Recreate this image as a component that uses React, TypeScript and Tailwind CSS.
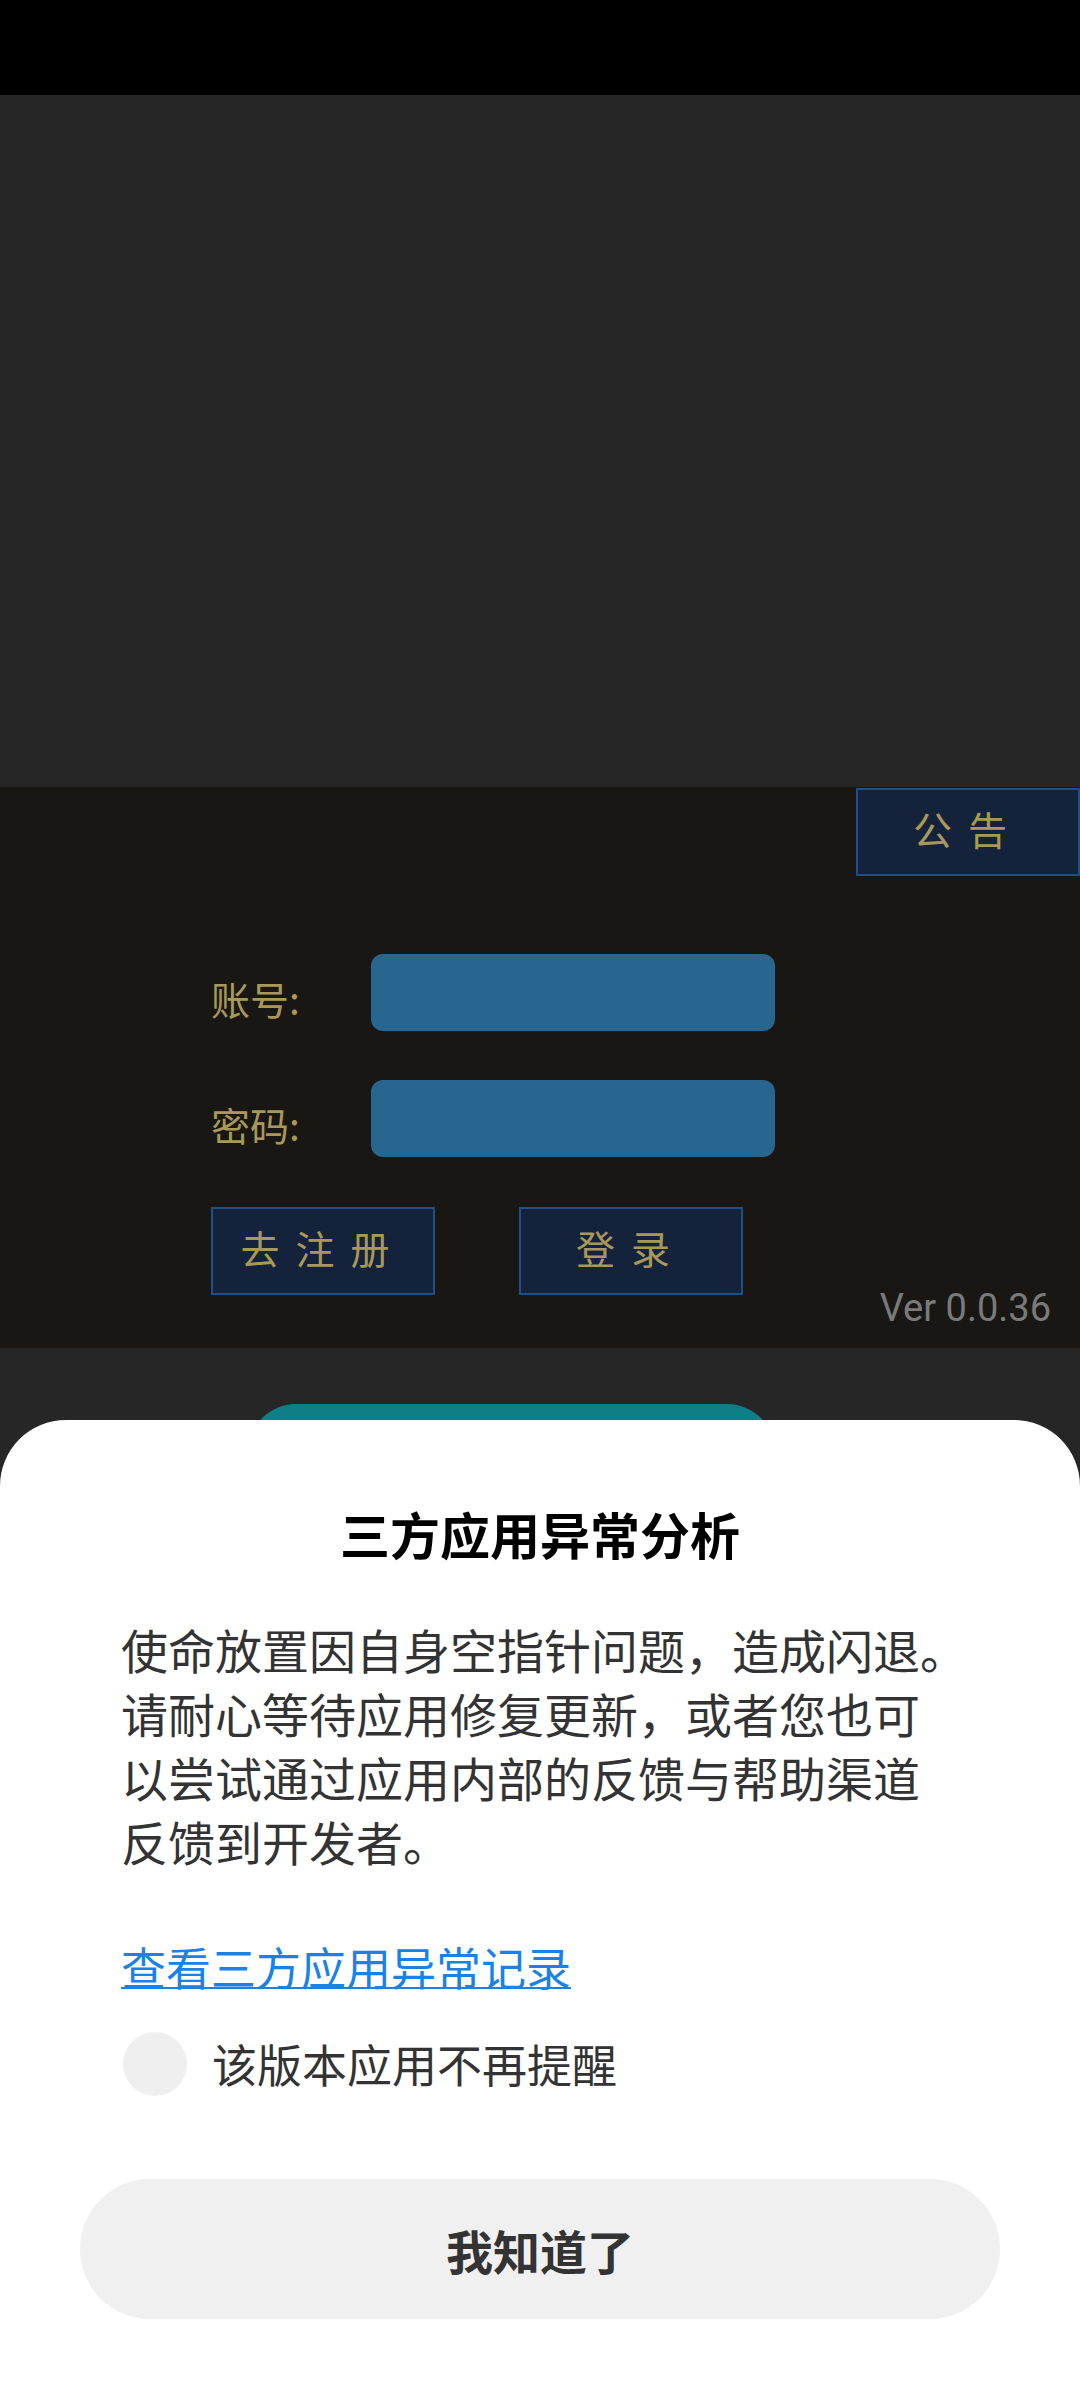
// App.tsx - 登录页 + 三方应用异常分析弹窗
const cjk = { fontFamily: '"Noto Sans CJK SC", "Noto Sans", sans-serif' };

function GoldButton({ label, className = '' }: { label: string; className?: string }) {
  return (
    <div
      className={`h-[88px] w-[224px] border-2 border-[#1f4f87] bg-[#15223b] flex items-center justify-center text-[39px] leading-none tracking-[16px] text-[#a8995a] ${className}`}
      style={cjk}
    >
      <span className="pb-[8px]">{label}</span>
    </div>
  );
}

function FieldRow({ label }: { label: string }) {
  return (
    <div className="flex items-center">
      <div className="w-[160px] text-[39px] leading-none text-[#a8995a] mt-[12px]" style={cjk}>
        {label}
      </div>
      <div className="w-[404px] h-[77px] rounded-[12px] bg-[#28668f]" />
    </div>
  );
}

export default function App() {
  const bodyLines = [
    '使命放置因自身空指针问题，造成闪退。',
    '请耐心等待应用修复更新，或者您也可',
    '以尝试通过应用内部的反馈与帮助渠道',
    '反馈到开发者。',
  ];

  return (
    <div className="relative w-[1080px] h-[2400px] overflow-hidden bg-[#262626]">
      {/* 状态栏 */}
      <div className="h-[95px] bg-black" />

      {/* 游戏画面区域 */}
      <div className="h-[692px] bg-[#262626]" />

      {/* 登录面板 */}
      <div className="h-[561px] bg-[#181713] flex flex-col">
        <div className="flex justify-end pt-px">
          <GoldButton label="公告" className="h-[87px]" />
        </div>

        <div className="pl-[211px] mt-[78px] flex flex-col gap-[49px]">
          <FieldRow label="账号:" />
          <FieldRow label="密码:" />
        </div>

        <div className="pl-[211px] mt-[50px] flex gap-[84px]">
          <GoldButton label="去注册" />
          <GoldButton label="登录" />
        </div>

        <div className="flex justify-end pr-[29px] -mt-[6px]">
          <span
            className="text-[38px] leading-none text-[#7a7a7a]"
            style={{ fontFamily: 'Roboto, "Liberation Sans", sans-serif' }}
          >
            Ver 0.0.36
          </span>
        </div>
      </div>

      {/* 被遮住的按钮 */}
      <div className="mt-[56px] ml-[248px] w-[527px] h-[120px] rounded-[48px] bg-[#0e7f88]" />

      {/* 底部弹窗 */}
      <div
        className="absolute left-0 right-0 top-[1420px] h-[980px] bg-white rounded-t-[66px] flex flex-col"
        style={cjk}
      >
        <div className="pt-[88px] text-center text-[50px] leading-none font-bold text-black">
          三方应用异常分析
        </div>

        <div className="mt-[59px] pl-[121px] text-[47px] leading-[64px] text-[#333333]">
          {bodyLines.map((line) => (
            <div key={line} className="whitespace-nowrap">
              {line}
            </div>
          ))}
        </div>

        <div className="mt-[71px] pl-[121px]">
          <span className="text-[45px] leading-none text-[#1a82e6] underline decoration-2">
            查看三方应用异常记录
          </span>
        </div>

        <div className="mt-[41px] pl-[123px] flex items-center gap-[25px]">
          <div className="w-[64px] h-[64px] rounded-full bg-[#efefef]" />
          <span className="text-[45px] leading-none text-[#333333] -mt-[2px]">该版本应用不再提醒</span>
        </div>

        <div className="mt-[83px] mx-[80px] h-[140px] rounded-full bg-[#f0f0f0] flex items-center justify-center">
          <span className="text-[47px] leading-none font-bold text-[#333333]">我知道了</span>
        </div>
      </div>
    </div>
  );
}
